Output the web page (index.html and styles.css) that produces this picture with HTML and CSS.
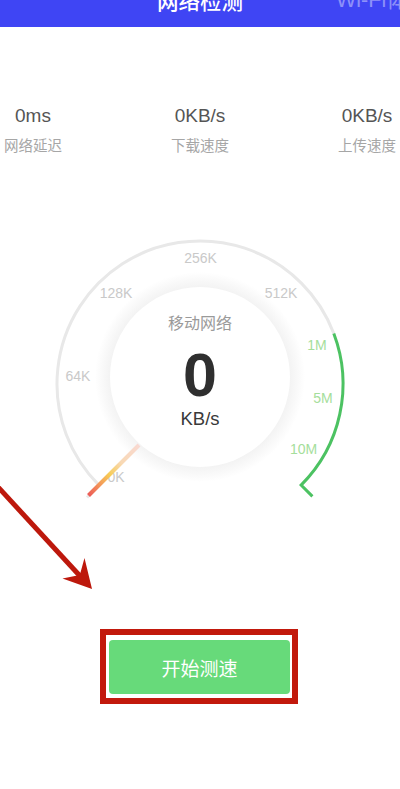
FILE: index.html
```html
<!DOCTYPE html>
<html lang="zh">
<head>
<meta charset="utf-8">
<title>网络检测</title>
<link rel="stylesheet" href="styles.css">
</head>
<body>
<header class="topbar">
  <div class="tabs">
    <span class="tab tab-active">网络检测</span>
    <span class="tab tab-dim">Wi-Fi体检</span>
  </div>
</header>

<section class="stats">
  <div class="stat">
    <div class="stat-value">0ms</div>
    <div class="stat-label">网络延迟</div>
  </div>
  <div class="stat">
    <div class="stat-value">0KB/s</div>
    <div class="stat-label">下载速度</div>
  </div>
  <div class="stat">
    <div class="stat-value">0KB/s</div>
    <div class="stat-label">上传速度</div>
  </div>
</section>

<section class="gauge">
  <svg class="gauge-svg" width="400" height="280" viewBox="0 230 400 280">
    <defs>
      <radialGradient id="halo" cx="200" cy="377" r="105" gradientUnits="userSpaceOnUse">
        <stop offset="0.855" stop-color="#f3f3f3"/>
        <stop offset="0.93" stop-color="#f9f9f9"/>
        <stop offset="1" stop-color="#ffffff"/>
      </radialGradient>
      <linearGradient id="needle" x1="88" y1="496" x2="139" y2="445" gradientUnits="userSpaceOnUse">
        <stop offset="0" stop-color="#ec5757"/>
        <stop offset="0.22" stop-color="#f3955a"/>
        <stop offset="0.42" stop-color="#f7cc55"/>
        <stop offset="0.65" stop-color="#f8d9b4"/>
        <stop offset="1" stop-color="#f9d9d2"/>
      </linearGradient>
    </defs>
    <path class="arc-gray" d="M 98.9 485.1 A 143 143 0 1 1 333.8 333.5"/>
    <path class="arc-gray" d="M 98.9 485.1 L 87 497.5"/>
    <path class="arc-green" d="M 333.8 333.5 A 143 143 0 0 1 301.1 485.1 L 312.4 496.4"/>
    <circle cx="200" cy="377" r="105" fill="url(#halo)"/>
    <circle cx="200" cy="377" r="90" fill="#ffffff"/>
    <g class="tick-label">
      <text x="200.5" y="258">256K</text>
      <text x="116" y="293">128K</text>
      <text x="281" y="293">512K</text>
      <text x="78" y="376">64K</text>
      <text x="116" y="477">0K</text>
    </g>
    <g class="tick-label tick-green">
      <text x="317" y="345">1M</text>
      <text x="323" y="398">5M</text>
      <text x="303.5" y="449">10M</text>
    </g>
    <line x1="88.5" y1="495.5" x2="139" y2="445" stroke="url(#needle)" stroke-width="4"/>
    <text class="center-title" x="200" y="322">移动网络</text>
    <text class="center-value" x="200" y="375">0</text>
    <text class="center-unit" x="200" y="418">KB/s</text>
  </svg>
</section>

<section class="action">
  <div class="highlight-box">
    <button class="start-btn" type="button">开始测速</button>
  </div>
</section>

<svg class="annotation" width="400" height="789" viewBox="0 0 400 789">
  <line x1="-2" y1="487" x2="80" y2="576" stroke="#bd180c" stroke-width="5"/>
  <polygon points="92,589 62.5,578.5 79.8,575 84.5,558" fill="#bd180c"/>
</svg>
</body>
</html>
```

FILE: styles.css
```css
html, body {
  margin: 0;
  padding: 0;
  background: #ffffff;
}

body {
  width: 400px;
  height: 789px;
  overflow: hidden;
  font-family: "Liberation Sans", "Noto Sans CJK SC", sans-serif;
  color: #333333;
}

.topbar {
  height: 27px;
  background: #3f45f4;
  overflow: hidden;
}

.tabs {
  display: flex;
  align-items: center;
  gap: 93px;
  padding-left: 157px;
  margin-top: -11px;
  height: 22px;
  white-space: nowrap;
}

.tab {
  font-family: "Noto Sans CJK SC", "Liberation Sans", sans-serif;
  font-size: 21.5px;
  line-height: 22px;
}

.tab-active {
  color: #ffffff;
  font-weight: 500;
}

.tab-dim {
  color: rgba(255, 255, 255, 0.42);
  font-family: "Liberation Sans", "Noto Sans CJK SC", sans-serif;
}

.stats {
  display: flex;
  justify-content: space-between;
  padding-top: 78px;
}

.stat {
  width: 66px;
  display: flex;
  flex-direction: column;
  align-items: center;
  gap: 9px;
}

.stat-value {
  font-size: 19px;
  line-height: 22px;
  color: #555555;
  white-space: nowrap;
}

.stat-label {
  font-family: "Noto Sans CJK SC", sans-serif;
  font-size: 14.5px;
  line-height: 18px;
  color: #a6a6a6;
  white-space: nowrap;
}

.gauge {
  margin-top: 76px;
  height: 280px;
}

.gauge-svg {
  display: block;
}

.arc-gray {
  fill: none;
  stroke: #e8e8e8;
  stroke-width: 3;
}

.arc-green {
  fill: none;
  stroke: #4cc262;
  stroke-width: 3;
}

.tick-label text {
  font-family: "Liberation Sans", sans-serif;
  font-size: 14px;
  fill: #c9c9c9;
  text-anchor: middle;
  dominant-baseline: central;
}

.tick-green text {
  fill: #a5de9b;
}

.center-title {
  font-family: "Noto Sans CJK SC", sans-serif;
  font-size: 16px;
  fill: #9a9a9a;
  text-anchor: middle;
  dominant-baseline: central;
}

.center-value {
  font-family: "Liberation Sans", sans-serif;
  font-weight: bold;
  font-size: 61px;
  fill: #2f2f2f;
  text-anchor: middle;
  dominant-baseline: central;
}

.center-unit {
  font-family: "Liberation Sans", sans-serif;
  font-size: 18.5px;
  fill: #3a3a3a;
  text-anchor: middle;
  dominant-baseline: central;
}

.action {
  margin-top: 119px;
  padding-left: 100px;
}

.highlight-box {
  display: inline-flex;
  border: 6px solid #c2190c;
  padding: 5px 2px 4px 3px;
  background: #ffffff;
}

.start-btn {
  width: 181px;
  height: 54px;
  border: none;
  border-radius: 4px;
  background: #67da7a;
  color: #ffffff;
  font-family: "Noto Sans CJK SC", sans-serif;
  font-size: 19px;
  padding: 0;
  margin: 0;
}

.annotation {
  position: absolute;
  top: 0;
  left: 0;
  pointer-events: none;
}
```
